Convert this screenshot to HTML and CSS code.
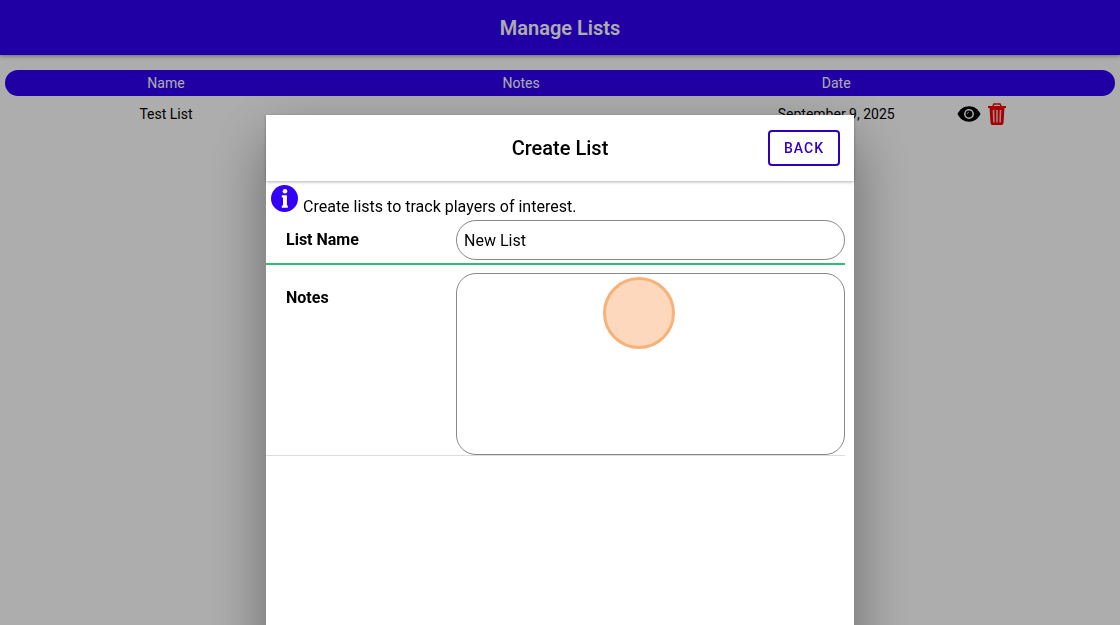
FILE: index.html
```
<!DOCTYPE html>
<html lang="en">
<head>
    <meta charset="utf-8">
    <meta name="viewport" content="width=device-width, initial-scale=1">
    <title>Manage Lists</title>
    <link rel="stylesheet" href="styles.css">
</head>
<body>

<header class="toolbar">
    <h1>Manage Lists</h1>
</header>

<table class="lists">
    <thead>
        <tr>
            <th class="col-name">Name</th>
            <th class="col-notes">Notes</th>
            <th>Date</th>
            <th class="col-actions"></th>
        </tr>
    </thead>
    <tbody>
        <tr>
            <td>Test List</td>
            <td></td>
            <td>September 9, 2025</td>
            <td>
                <div class="actions">
                    <button type="button" class="icon-button" aria-label="View list">
                        <svg width="24" height="24" viewBox="0 0 24 24">
                            <path fill="#000" d="M0.500 12C3 7 7 4.300 12 4.300S21 7 23.500 12C21 17 17 19.700 12 19.700S3 17 .5 12z"/>
                            <circle cx="12" cy="12" r="4.200" fill="none" stroke="#fff" stroke-width="1.500"/>
                            <path d="M10.200 12a1.800 1.800 0 0 1 1.800-1.800" fill="none" stroke="#999" stroke-width="1"/>
                        </svg>
                    </button>
                    <button type="button" class="icon-button" aria-label="Delete list">
                        <svg width="20" height="24" viewBox="0 0 20 24">
                            <path d="M6 4L7 2h6l1 2" fill="none" stroke="#f50000" stroke-width="1.600"/>
                            <path d="M1 4h18v2H1z" fill="#f50000"/>
                            <path d="M2.500 5h15l-1 16q-.2 2-2 2h-9q-1.800 0-2-2z" fill="#f50000"/>
                            <path d="M6.500 8l.4 12.500M10 8v12.500M13.500 8l-.4 12.500" fill="none" stroke="#f5c0c0" stroke-width="1.600"/>
                        </svg>
                    </button>
                </div>
            </td>
        </tr>
    </tbody>
</table>

<div class="backdrop">
    <div class="modal" role="dialog" aria-labelledby="modalTitle">
        <div class="modal-header">
            <h2 id="modalTitle">Create List</h2>
            <button type="button" class="back">BACK</button>
        </div>
        <form id="listForm">
            <div class="info">
                <svg width="27" height="27" viewBox="0 0 27 27">
                    <circle cx="13.500" cy="13.500" r="13.500" fill="#3300f5"/>
                    <circle cx="14" cy="6.300" r="2.300" fill="#fff"/>
                    <path fill="#fff" d="M10.800 10.300h5.100v10.200h.9v2.200h-6v-2.200h1.200v-8h-1.200z"/>
                </svg>
                <span>Create lists to track players of interest.</span>
            </div>
            <div class="field active">
                <label for="listName">List Name</label>
                <input type="text" id="listName" value="New List">
            </div>
            <div class="field">
                <label for="notes">Notes</label>
                <textarea id="notes"></textarea>
            </div>
        </form>
    </div>
</div>

<div class="click-marker"></div>

</body>
</html>
```
FILE: styles.css
```
* {
    box-sizing: border-box;
}

body {
    margin: 0;
    font-family: Roboto, Arial, sans-serif;
    font-size: 16px;
    color: #000;
    background-color: #fff;
}

h1, h2 {
    margin: 0;
    font-size: 20px;
    font-weight: 500;
}

.toolbar {
    display: flex;
    align-items: center;
    justify-content: center;
    height: 55px;
    color: #fff;
    background-color: #3000f2;
    box-shadow: 0 1px 4px rgba(0, 0, 0, 0.4);
}

.toolbar h1 {
    font-weight: 600;
}

.lists {
    width: calc(100% - 10px);
    margin: 15px 5px 0;
    table-layout: fixed;
    border-collapse: separate;
    border-spacing: 0;
    font-size: 14px;
    text-align: center;
}

.lists th {
    height: 26px;
    padding: 0;
    color: #fff;
    font-weight: 400;
    background-color: #3000f2;
}

.lists th:first-child {
    border-radius: 13px 0 0 13px;
}

.lists th:last-child {
    border-radius: 0 13px 13px 0;
}

.lists td {
    height: 35px;
    padding: 0;
}

.col-name {
    width: 29%;
}

.col-notes {
    width: 35%;
}

.col-actions {
    width: 158px;
}

.actions {
    display: flex;
    align-items: center;
    gap: 6px;
}

.icon-button {
    display: flex;
    padding: 0;
    border: none;
    background: none;
    cursor: pointer;
}

.backdrop {
    position: fixed;
    inset: 0;
    display: flex;
    justify-content: center;
    padding-top: 115px;
    overflow: hidden;
    background-color: rgba(0, 0, 0, 0.32);
}

.modal {
    width: 53%;
    max-width: 588px;
    background-color: #fff;
    box-shadow: 0 24px 56px rgba(0, 0, 0, 0.4);
    /* runs on past the bottom of the window */
    margin-bottom: -60px;
}

.modal-header {
    display: grid;
    grid-template-columns: 1fr auto 1fr;
    align-items: center;
    height: 66px;
    padding: 0 14px;
    box-shadow: 0 1px 3px rgba(0, 0, 0, 0.3);
}

.modal-header h2 {
    grid-column: 2;
}

.back {
    justify-self: end;
    width: 72px;
    height: 36px;
    padding: 0;
    border: 2px solid #3000b8;
    border-radius: 4px;
    color: #3000c8;
    background-color: #fff;
    font-family: inherit;
    font-size: 14px;
    font-weight: 500;
    letter-spacing: 1px;
    cursor: pointer;
}

.info {
    display: flex;
    align-items: flex-start;
    gap: 5px;
    padding: 4px 5px 0;
    height: 39px;
}

.info span {
    padding-top: 12px;
    line-height: 20px;
}

.field {
    display: grid;
    grid-template-columns: 170px 1fr;
    margin-right: 9px;
    padding: 8px 0 0 20px;
    border-bottom: 1px solid #ddd;
}

.field.active {
    align-items: center;
    padding: 0 0 3px 20px;
    border-bottom: 2px solid #2dbd75;
}

.field label {
    font-weight: 700;
    line-height: 20px;
}

.field:not(.active) label {
    padding-top: 15px;
}

.field input, .field textarea {
    display: block;
    width: 100%;
    border: 1px solid #888;
    border-radius: 20px;
    background-color: #fff;
    color: #000;
    font-family: inherit;
    font-size: 16px;
    outline: none;
}

.field input {
    height: 40px;
    padding: 0 7px;
}

.field textarea {
    height: 182px;
    padding: 10px 7px;
    resize: none;
}

.click-marker {
    position: fixed;
    top: 277px;
    left: calc(50% + 43px);
    width: 72px;
    height: 72px;
    border: 3px solid #f7b27a;
    border-radius: 50%;
    background-color: #fdd8bc;
    pointer-events: none;
}
```
